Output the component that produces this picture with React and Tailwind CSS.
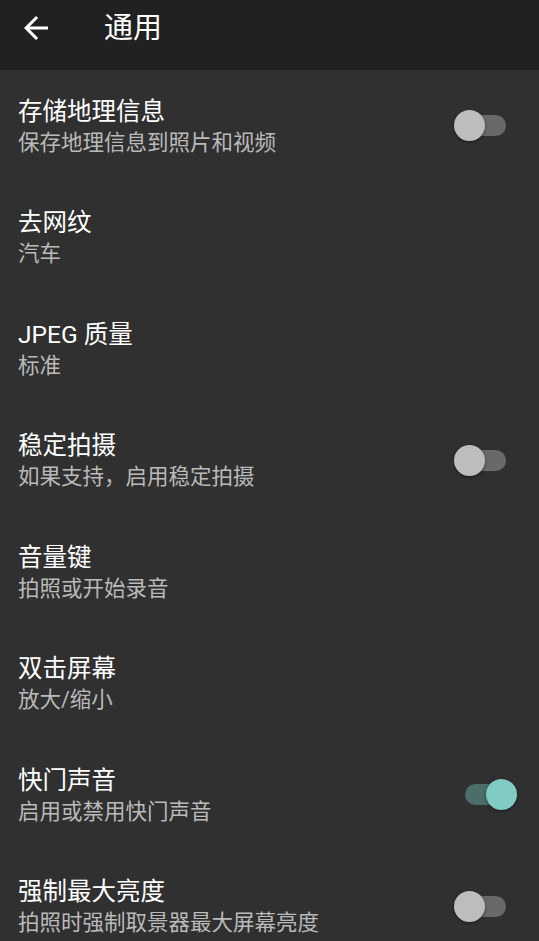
const settings = [
  { title: "存储地理信息", summary: "保存地理信息到照片和视频", toggle: false },
  { title: "去网纹", summary: "汽车" },
  { title: "JPEG 质量", summary: "标准" },
  { title: "稳定拍摄", summary: "如果支持，启用稳定拍摄", toggle: false },
  { title: "音量键", summary: "拍照或开始录音" },
  { title: "双击屏幕", summary: "放大/缩小" },
  { title: "快门声音", summary: "启用或禁用快门声音", toggle: true },
  { title: "强制最大亮度", summary: "拍照时强制取景器最大屏幕亮度", toggle: false },
];

const Switch = ({ on }) => (
  <div className="relative w-[63px] h-[31px] shrink-0 mr-[22px]">
    <div
      className={`absolute left-[11px] top-[5px] w-[41px] h-[21px] rounded-full ${
        on ? "bg-[#4b6e6b]" : "bg-[#696969]"
      }`}
    />
    <div
      className={`absolute top-0 w-[31px] h-[31px] rounded-full shadow-[0_1px_3px_rgba(0,0,0,0.5)] ${
        on ? "left-[32px] bg-[#80cbc4]" : "left-0 bg-[#bdbdbd]"
      }`}
    />
  </div>
);

export default function App() {
  return (
    <div
      className="w-[539px] h-[941px] overflow-hidden bg-[#303030]"
      style={{ fontFamily: 'Roboto, "Noto Sans CJK SC", sans-serif' }}
    >
      <header className="h-[70px] bg-[#212121] flex items-start pt-[10px] pl-[18px]">
        <svg viewBox="0 0 24 24" className="w-[36px] h-[36px] fill-white">
          <path d="M20 11H7.83l5.59-5.59L12 4l-8 8 8 8 1.41-1.41L7.83 13H20v-2z" />
        </svg>
        <h1 className="ml-[50px] text-[29px] leading-[37px] text-white">通用</h1>
      </header>
      <div>
        {settings.map((s) => (
          <div key={s.title} className="h-[111.5px] flex items-center pl-[18px]">
            <div className="flex-1 min-w-0 pt-[2px]">
              <div className="text-[24.5px] leading-[32px] text-white">{s.title}</div>
              <div className="text-[21.5px] leading-[30px] text-[#bababa]">{s.summary}</div>
            </div>
            {s.toggle !== undefined && <Switch on={s.toggle} />}
          </div>
        ))}
      </div>
    </div>
  );
}
